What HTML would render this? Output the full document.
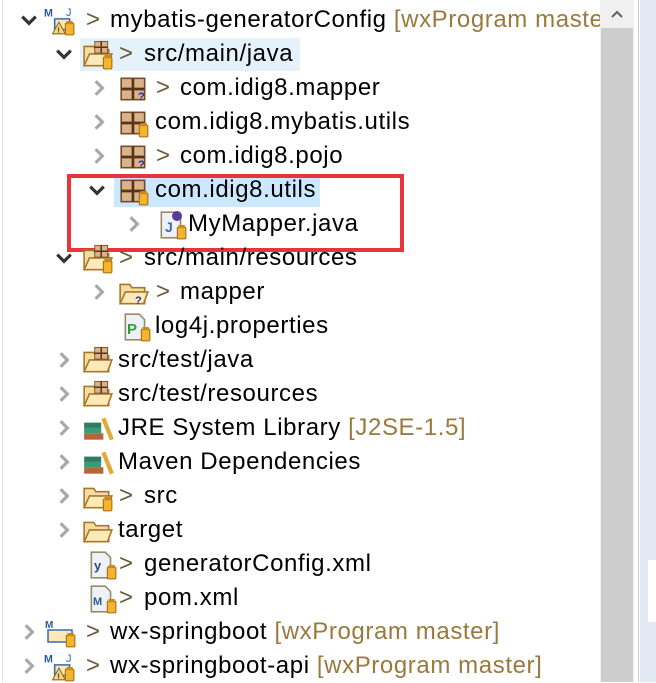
<!DOCTYPE html>
<html><head><meta charset="utf-8"><style>
html,body{margin:0;padding:0;}
body{width:656px;height:682px;position:relative;overflow:hidden;background:#fff;font-family:"Liberation Sans","Noto Sans CJK SC",sans-serif;font-size:24px;letter-spacing:.6px;color:#000;}
.r{position:absolute;height:34px;line-height:34px;white-space:nowrap;}
.g{color:#9a7a3c;}
.a{color:#6b5a3a;margin-right:8px;}
.ic{position:absolute;top:3px;width:32px;height:30px;}
.ch{position:absolute;top:8px;width:18px;height:18px;}
</style></head><body>
<div style="position:absolute;left:2px;top:0;width:1px;height:682px;background:#e3e3e3"></div>
<div style="position:absolute;left:80px;top:38px;width:220px;height:33px;background:#e5f1fb"></div>
<div style="position:absolute;left:114px;top:175px;width:206px;height:32px;background:#cce8ff"></div>
<div style="position:absolute;left:67px;top:174px;width:329px;height:70px;border:4px solid #e8353b"></div>

<svg width="0" height="0" style="position:absolute">
<defs>
<symbol id="dn" viewBox="0 0 16 16"><path d="M2 5l6 6 6-6" fill="none" stroke="#333" stroke-width="2.8"/></symbol>
<symbol id="rt" viewBox="0 0 16 16"><path d="M5 2l6 6-6 6" fill="none" stroke="#a8a8a8" stroke-width="2.8"/></symbol>
<symbol id="jar" viewBox="0 0 30 28"><rect x="20" y="16" width="8" height="11" rx="1" fill="#f2b52d" stroke="#a86a10"/><rect x="21" y="14" width="6" height="3" fill="#c98a1c"/></symbol>
<symbol id="pkg" viewBox="0 0 30 28"><rect x="3" y="4" width="22" height="20" fill="#d9b48a" stroke="#7a4a28" stroke-width="1.5"/><path d="M3 14h22M14 4v20" stroke="#5a3218" stroke-width="2.5"/></symbol>
<symbol id="fold" viewBox="0 0 30 28"><path d="M2 6h9l2 3h12v15H2z" fill="#f5dca0" stroke="#a8782a" stroke-width="1.5"/><path d="M2 24l5-11h21l-4 11z" fill="#fbe9b8" stroke="#a8782a" stroke-width="1.5"/></symbol>
<symbol id="lib" viewBox="0 0 30 28"><rect x="2" y="8" width="16" height="5" fill="#2e7d60"/><rect x="2" y="13" width="16" height="5" fill="#3b9a7a"/><rect x="2" y="18" width="18" height="6" fill="#b5653a"/><path d="M20 4l8 20" stroke="#e1a93a" stroke-width="4"/></symbol>
<symbol id="file" viewBox="0 0 30 28"><path d="M5 2h13l5 5v19H5z" fill="#eef2f8" stroke="#9a8a6a" stroke-width="1.5"/></symbol>
<symbol id="proj" viewBox="0 0 30 28"><text x="0" y="10" font-size="10" font-weight="bold" fill="#2a5a9a" font-family="Liberation Sans">M</text><path d="M10 12h14v10H10z" fill="#fbe9b8" stroke="#3a6ab0" stroke-width="1.5"/><path d="M8 26l6-11 6 11z" fill="#f5d67a" stroke="#8a6a2a"/><text x="12.5" y="25" font-size="7" font-weight="bold" fill="#333" font-family="Liberation Sans">!</text></symbol>
</defs></svg>

<div class="r" style="top:3px;left:0">
<svg class="ch" style="left:20px"><use href="#dn"/></svg>
<svg class="ic" style="left:44px"><use href="#proj"/><text x="22" y="10" font-size="11" fill="#3a6ab0" font-family="Liberation Sans">J</text><use href="#jar"/></svg>
<span style="position:absolute;left:86px" class="a">&gt;</span><span style="position:absolute;left:110px">mybatis-generatorConfig <span class="g">[wxProgram master]</span></span></div>

<div class="r" style="top:37px"><svg class="ch" style="left:55px"><use href="#dn"/></svg>
<svg class="ic" style="left:82px"><use href="#fold"/><use href="#pkg" transform="translate(11,-1) scale(.55)"/><use href="#jar"/></svg>
<span style="position:absolute;left:119px" class="a">&gt;</span><span style="position:absolute;left:144px">src/main/java</span></div>

<div class="r" style="top:71px"><svg class="ch" style="left:90px"><use href="#rt"/></svg>
<svg class="ic" style="left:118px"><use href="#pkg"/><text x="20" y="26" font-size="11" font-weight="bold" fill="#2a2aa0">?</text></svg>
<span style="position:absolute;left:156px" class="a">&gt;</span><span style="position:absolute;left:180px">com.idig8.mapper</span></div>

<div class="r" style="top:105px"><svg class="ch" style="left:90px"><use href="#rt"/></svg>
<svg class="ic" style="left:118px"><use href="#pkg"/><use href="#jar"/></svg>
<span style="position:absolute;left:155px">com.idig8.mybatis.utils</span></div>

<div class="r" style="top:139px"><svg class="ch" style="left:90px"><use href="#rt"/></svg>
<svg class="ic" style="left:118px"><use href="#pkg"/><text x="20" y="26" font-size="11" font-weight="bold" fill="#2a2aa0">?</text></svg>
<span style="position:absolute;left:156px" class="a">&gt;</span><span style="position:absolute;left:180px">com.idig8.pojo</span></div>

<div class="r" style="top:173px"><svg class="ch" style="left:88px"><use href="#dn"/></svg>
<svg class="ic" style="left:118px"><use href="#pkg"/><use href="#jar"/></svg>
<span style="position:absolute;left:155px">com.idig8.utils</span></div>

<div class="r" style="top:207px"><svg class="ch" style="left:125px"><use href="#rt"/></svg>
<svg class="ic" style="left:156px"><use href="#file"/><text x="9" y="22" font-size="14" font-weight="bold" fill="#3a6ab0" font-family="Liberation Sans">J</text><circle cx="21" cy="6" r="5" fill="#5a3a9a"/><use href="#jar"/></svg>
<span style="position:absolute;left:188px">MyMapper.java</span></div>

<div class="r" style="top:241px"><svg class="ch" style="left:55px"><use href="#dn"/></svg>
<svg class="ic" style="left:82px"><use href="#fold"/><use href="#pkg" transform="translate(11,-1) scale(.55)"/><use href="#jar"/></svg>
<span style="position:absolute;left:119px" class="a">&gt;</span><span style="position:absolute;left:144px">src/main/resources</span></div>

<div class="r" style="top:275px"><svg class="ch" style="left:90px"><use href="#rt"/></svg>
<svg class="ic" style="left:118px"><use href="#fold"/><text x="17" y="26" font-size="11" font-weight="bold" fill="#2a2aa0">?</text></svg>
<span style="position:absolute;left:156px" class="a">&gt;</span><span style="position:absolute;left:180px">mapper</span></div>

<div class="r" style="top:309px">
<svg class="ic" style="left:120px"><use href="#file"/><text x="7" y="22" font-size="15" font-weight="bold" fill="#2aa03a" font-family="Liberation Sans">P</text><use href="#jar"/></svg>
<span style="position:absolute;left:155px">log4j.properties</span></div>

<div class="r" style="top:343px"><svg class="ch" style="left:55px"><use href="#rt"/></svg>
<svg class="ic" style="left:82px"><use href="#fold"/><use href="#pkg" transform="translate(11,-1) scale(.55)"/></svg>
<span style="position:absolute;left:118px">src/test/java</span></div>

<div class="r" style="top:377px"><svg class="ch" style="left:55px"><use href="#rt"/></svg>
<svg class="ic" style="left:82px"><use href="#fold"/><use href="#pkg" transform="translate(11,-1) scale(.55)"/></svg>
<span style="position:absolute;left:118px">src/test/resources</span></div>

<div class="r" style="top:411px"><svg class="ch" style="left:55px"><use href="#rt"/></svg>
<svg class="ic" style="left:82px"><use href="#lib"/></svg>
<span style="position:absolute;left:118px">JRE System Library <span class="g">[J2SE-1.5]</span></span></div>

<div class="r" style="top:445px"><svg class="ch" style="left:55px"><use href="#rt"/></svg>
<svg class="ic" style="left:82px"><use href="#lib"/></svg>
<span style="position:absolute;left:118px">Maven Dependencies</span></div>

<div class="r" style="top:479px"><svg class="ch" style="left:55px"><use href="#rt"/></svg>
<svg class="ic" style="left:82px"><use href="#fold"/><use href="#jar"/></svg>
<span style="position:absolute;left:119px" class="a">&gt;</span><span style="position:absolute;left:144px">src</span></div>

<div class="r" style="top:513px"><svg class="ch" style="left:55px"><use href="#rt"/></svg>
<svg class="ic" style="left:82px"><use href="#fold"/></svg>
<span style="position:absolute;left:118px">target</span></div>

<div class="r" style="top:547px">
<svg class="ic" style="left:86px"><use href="#file"/><text x="8" y="20" font-size="13" font-weight="bold" fill="#2a4a7a" font-family="Liberation Sans">y</text><use href="#jar"/></svg>
<span style="position:absolute;left:119px" class="a">&gt;</span><span style="position:absolute;left:144px">generatorConfig.xml</span></div>

<div class="r" style="top:581px">
<svg class="ic" style="left:86px"><use href="#file"/><text x="7" y="21" font-size="11" font-weight="bold" fill="#2a5a9a" font-family="Liberation Sans">M</text><use href="#jar"/></svg>
<span style="position:absolute;left:119px" class="a">&gt;</span><span style="position:absolute;left:144px">pom.xml</span></div>

<div class="r" style="top:615px"><svg class="ch" style="left:20px"><use href="#rt"/></svg>
<svg class="ic" style="left:45px"><text x="0" y="10" font-size="10" font-weight="bold" fill="#2a5a9a" font-family="Liberation Sans">M</text><path d="M3 12h24v12H3z" fill="#fbe9b8" stroke="#3a6ab0" stroke-width="1.5"/><use href="#jar"/></svg>
<span style="position:absolute;left:86px" class="a">&gt;</span><span style="position:absolute;left:110px">wx-springboot <span class="g">[wxProgram master]</span></span></div>

<div class="r" style="top:649px"><svg class="ch" style="left:20px"><use href="#rt"/></svg>
<svg class="ic" style="left:44px"><use href="#proj"/><text x="22" y="10" font-size="11" fill="#3a6ab0" font-family="Liberation Sans">J</text><use href="#jar"/></svg>
<span style="position:absolute;left:86px" class="a">&gt;</span><span style="position:absolute;left:110px">wx-springboot-api <span class="g">[wxProgram master]</span></span></div>

<div style="position:absolute;left:600px;top:0;width:34px;height:682px;background:#f0f0f0"></div>
<div style="position:absolute;left:601px;top:28px;width:32px;height:654px;background:#cdcdcd"></div>
<svg style="position:absolute;left:609px;top:8px" width="16" height="12"><path d="M3 9l5-5 5 5" fill="none" stroke="#606060" stroke-width="2"/></svg>
<div style="position:absolute;left:638px;top:0;width:1px;height:682px;background:#c8ccd4"></div>
<div style="position:absolute;left:640px;top:0;width:16px;height:682px;background:#e3e8f5"></div>
<div style="position:absolute;left:648px;top:560px;width:8px;height:62px;background:#fff"></div>
</body></html>
